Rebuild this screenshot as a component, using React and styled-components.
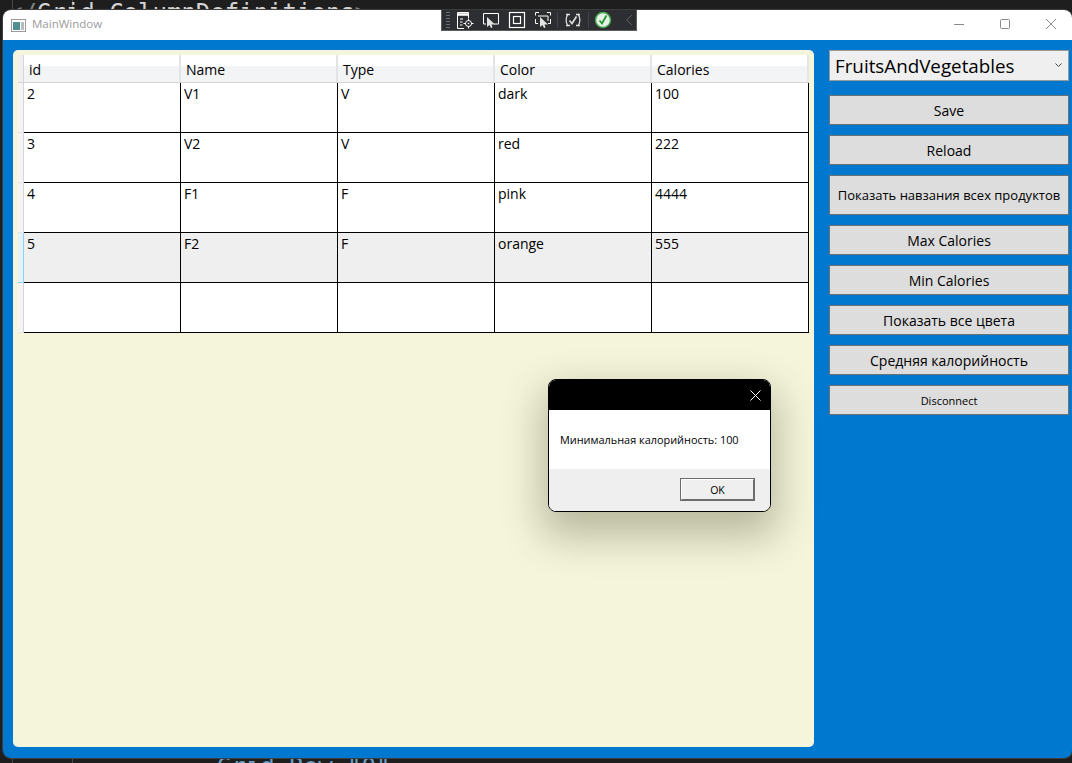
import React from 'react';
import styled, { createGlobalStyle } from 'styled-components';

const columns = ['id', 'Name', 'Type', 'Color', 'Calories'];
const rows = [
    ['2', 'V1', 'V', 'dark', '100'],
    ['3', 'V2', 'V', 'red', '222'],
    ['4', 'F1', 'F', 'pink', '4444'],
    ['5', 'F2', 'F', 'orange', '555'],
    ['', '', '', '', ''],
];
const buttons = [
    { label: 'Save' },
    { label: 'Reload' },
    { label: 'Показать навзания всех продуктов', tall: true, small: true },
    { label: 'Max Calories' },
    { label: 'Min Calories' },
    { label: 'Показать все цвета' },
    { label: 'Средняя калорийность' },
    { label: 'Disconnect', tiny: true },
];

const Toolbar = () => (
    <DebugBar>
        <Grip />
        <svg width="18" height="18" viewBox="0 0 18 18" fill="none" stroke="#fff" strokeWidth="1">
            <path d="M8 17.500H1.500V1.500H12.500V7" />
            <path d="M1.500 3.500H12.500" strokeWidth="2.500" />
            <path d="M4 8H7M4 11H6.500M4 14H6.500" />
            <circle cx="12.500" cy="12.500" r="3" />
            <circle cx="12.500" cy="12.500" r="0.800" fill="#fff" stroke="none" />
            <path d="M12.500 7.500v2.500M12.500 15v2.500M7.500 12.500h2.500M15 12.500h2.500" />
        </svg>
        <svg width="18" height="18" viewBox="0 0 18 18" fill="none" stroke="#fff" strokeWidth="1">
            <path d="M4 13H1.500V2.500H16.500V13H12" />
            <path d="M5 6V16L7.500 14L9 17L10.500 16.500L9.500 13.500H13Z" fill="#e4e4e4" stroke="none" />
        </svg>
        <svg width="18" height="18" viewBox="0 0 18 18" fill="none" stroke="#fff" strokeWidth="1.200">
            <rect x="1.500" y="1.500" width="15" height="15" />
            <rect x="5.500" y="5.500" width="7" height="7" />
        </svg>
        <svg width="18" height="18" viewBox="0 0 18 18" fill="none" stroke="#fff" strokeWidth="1">
            <path d="M1.500 4.500V1.500H5M13 1.500H16.500V4.500M1.500 8V12.500H4M16.500 8V12.500H14" />
            <path d="M4 5H14V10" />
            <path d="M6 6V16L8.500 14L10 17L11.500 16.500L10.500 13.500H14Z" fill="#e4e4e4" stroke="none" />
        </svg>
        <Divider />
        <svg width="20" height="18" viewBox="0 0 20 18" fill="none" stroke="#dcdcdc" strokeWidth="1.300">
            <path d="M5 3C2.500 6.500 2.500 11.500 5 15M15 3C17.500 6.500 17.500 11.500 15 15" />
            <path d="M3 3.500H7M3 14.500H7M13 3.500H17M13 14.500H17" />
            <path d="M6.500 9.500L9 12.500L13.500 5.500" strokeWidth="1.700" />
        </svg>
        <Divider />
        <svg width="18" height="18" viewBox="0 0 18 18" fill="none">
            <circle cx="9" cy="9" r="7.500" fill="#e8f1e8" stroke="#46a84c" strokeWidth="1.500" />
            <path d="M5.500 9.500L8 12.500L12.500 4.500" stroke="#1f9b2e" strokeWidth="1.800" />
        </svg>
        <Collapse width="10" height="14" viewBox="0 0 10 14" fill="none" stroke="#5e6064" strokeWidth="1">
            <path d="M8 2L2.500 7L8 12" />
        </Collapse>
    </DebugBar>
);

const App = () => (
    <>
        <GlobalStyle />
        <Desktop>
            <CodeLine><Bracket>&lt;/</Bracket>Grid.ColumnDefinitions<Bracket>&gt;</Bracket></CodeLine>
            <Window>
                <TitleBar>
                    <AppIcon>
                        <svg width="15" height="13" viewBox="0 0 15 13">
                            <rect x="0.500" y="0.500" width="14" height="12" fill="#fff" stroke="#9a9a9a" />
                            <rect x="2" y="3" width="7" height="8" fill="#4f8f93" />
                            <rect x="10" y="3" width="3" height="8" fill="#b7bcc0" />
                        </svg>
                    </AppIcon>
                    <WindowTitle>MainWindow</WindowTitle>
                    <Toolbar />
                    <WindowControls>
                        <svg width="12" height="12" viewBox="0 0 12 12" stroke="#8a8a8a" fill="none"><path d="M1 6.500H11" /></svg>
                        <svg width="12" height="12" viewBox="0 0 12 12" stroke="#8a8a8a" fill="none"><rect x="1.500" y="1.500" width="9" height="9" rx="1" /></svg>
                        <svg width="12" height="12" viewBox="0 0 12 12" stroke="#8a8a8a" fill="none"><path d="M1 1L11 11M11 1L1 11" /></svg>
                    </WindowControls>
                </TitleBar>
                <Client>
                    <MainPanel>
                        <Table>
                            <HeaderRow>
                                <Corner />
                                {columns.map((c) => <HeaderCell key={c}>{c}</HeaderCell>)}
                            </HeaderRow>
                            {rows.map((r, i) => (
                                <Row key={i} $alt={i === 3}>
                                    <RowHeader $active={i === 3} />
                                    {r.map((v, j) => <Cell key={j}>{v}</Cell>)}
                                </Row>
                            ))}
                        </Table>
                        <Dialog>
                            <DialogHead>
                                <svg width="11" height="11" viewBox="0 0 11 11" stroke="#fff" fill="none"><path d="M0.500 0.500L10.500 10.500M10.500 0.500L0.500 10.500" /></svg>
                            </DialogHead>
                            <DialogBody>Минимальная калорийность: 100</DialogBody>
                            <DialogFoot><OkButton>OK</OkButton></DialogFoot>
                        </Dialog>
                    </MainPanel>
                    <Sidebar>
                        <Combo>
                            <span>FruitsAndVegetables</span>
                            <svg width="7" height="5" viewBox="0 0 7 5" stroke="#444" fill="none"><path d="M0.500 0.500L3.500 3.500L6.500 0.500" /></svg>
                        </Combo>
                        {buttons.map((b) => (
                            <SideButton key={b.label} $tall={b.tall} $small={b.small} $tiny={b.tiny}>{b.label}</SideButton>
                        ))}
                    </Sidebar>
                </Client>
            </Window>
            <CodeLineBottom>Grid.Row="0"</CodeLineBottom>
        </Desktop>
    </>
);

const GlobalStyle = createGlobalStyle`
    html, body {
        margin: 0;
        padding: 0;
        background: #1e1e1e;
        overflow: hidden;
    }
    * {
        box-sizing: border-box;
    }
`;

const Desktop = styled.div`
    position: relative;
    width: 1072px;
    height: 763px;
    padding: 10px 0 0 3px;
    background:
        linear-gradient(#4a4a4a, #4a4a4a) 12px 0 / 1px 100% no-repeat,
        linear-gradient(#4a4a4a, #4a4a4a) 72px 0 / 1px 100% no-repeat,
        #1e1e1e;
    overflow: hidden;
    font-family: "Open Sans", "Noto Sans", sans-serif;
`;

const CodeLine = styled.div`
    position: absolute;
    left: 8px;
    top: 0;
    height: 10px;
    overflow: hidden;
    font: 24px/24px "DejaVu Sans Mono", monospace;
    white-space: nowrap;
    color: #d4d4d4;
    padding-top: 1px;
`;

const Bracket = styled.span`
    color: #808080;
`;

const CodeLineBottom = styled.div`
    position: absolute;
    left: 217px;
    top: 753px;
    font: 24px "DejaVu Sans Mono", monospace;
    color: #6a9fc9;
`;

const Window = styled.div`
    position: relative;
    z-index: 1;
    width: 1069px;
    height: 748px;
    display: flex;
    flex-direction: column;
    border-radius: 8px;
    overflow: hidden;
    box-shadow: 0 0 0 1px #3d3d3d;
`;

const TitleBar = styled.div`
    position: relative;
    height: 30px;
    flex: none;
    display: flex;
    align-items: center;
    padding-left: 8px;
    background: #fff;
`;

const AppIcon = styled.span`
    display: flex;
    width: 15px;
    margin-right: 6px;
`;

const WindowTitle = styled.span`
    font-size: 11.5px;
    line-height: 28px;
    height: 30px;
    color: #9b9b9b;
`;

const DebugBar = styled.div`
    position: absolute;
    left: 438px;
    top: -1px;
    width: 196px;
    height: 22px;
    display: flex;
    align-items: center;
    gap: 8px;
    padding-left: 4px;
    background: #2d2e32;
    border: 1px solid #5d5d5d;
`;

const Grip = styled.span`
    width: 4px;
    height: 18px;
    margin-right: -2px;
    background-image: radial-gradient(#6d6f73 0.6px, transparent 0.8px);
    background-size: 2px 3px;
`;

const Divider = styled.span`
    width: 1px;
    height: 16px;
    margin: 0 -3px;
    background: #44464a;
`;

const Collapse = styled.svg`
    margin-left: 4px;
`;

const WindowControls = styled.div`
    margin-left: auto;
    display: flex;
    align-items: center;
    gap: 34px;
    padding: 0 15px 2px 0;
`;

const Client = styled.div`
    flex: 1;
    display: flex;
    gap: 15px;
    padding: 10px 3px 11px 10px;
    background: #0078d0;
`;

const MainPanel = styled.div`
    position: relative;
    width: 801px;
    padding: 5px 0 0 5px;
    background: #f5f5dc;
    border-radius: 5px;
`;

const Table = styled.div`
    width: 791px;
    display: flex;
    flex-direction: column;
`;

const HeaderRow = styled.div`
    height: 28px;
    display: grid;
    grid-template-columns: 6px repeat(5, 157px);
    background: linear-gradient(#ffffff 0 11px, #f3f4f6 11px);
    border-bottom: 1px solid #d5d5d5;
`;

const Corner = styled.div`
    background: #f0f0f0;
    border-right: 1px solid #d5d5d5;
`;

const HeaderCell = styled.div`
    padding: 6px 0 0 5px;
    font-size: 14px;
    line-height: 18px;
    color: #000;
    border-right: 2px solid #e4e4e6;
`;

const Row = styled.div`
    height: 50px;
    display: grid;
    grid-template-columns: 6px repeat(5, 157px);
    background: ${({ $alt }) => ($alt ? '#efefef' : '#fff')};
`;

const RowHeader = styled.div`
    background: ${({ $active }) => ($active ? '#e3f2fc' : '#f4f4f4')};
    border-right: 1px solid ${({ $active }) => ($active ? '#8fd0f5' : '#d5d5d5')};
    border-bottom: 1px solid ${({ $active }) => ($active ? '#8fd0f5' : '#e4e4e4')};
`;

const Cell = styled.div`
    padding: 2px 0 0 3px;
    font-size: 14px;
    line-height: 18px;
    color: #000;
    border-right: 1px solid #000;
    border-bottom: 1px solid #000;
`;

const Dialog = styled.div`
    position: absolute;
    left: 535px;
    top: 329px;
    width: 223px;
    height: 133px;
    display: flex;
    flex-direction: column;
    background: #fff;
    border: 1px solid #000;
    border-radius: 8px;
    box-shadow: 0 18px 40px 6px rgba(60, 60, 30, 0.33);
`;

const DialogHead = styled.div`
    height: 30px;
    flex: none;
    display: flex;
    align-items: center;
    justify-content: flex-end;
    padding-right: 9px;
    background: #000;
    border-radius: 7px 7px 0 0;
`;

const DialogBody = styled.div`
    flex: 1;
    padding: 22px 0 0 11px;
    font-size: 10.900px;
    line-height: 16px;
    color: #000;
`;

const DialogFoot = styled.div`
    height: 42px;
    flex: none;
    display: flex;
    justify-content: flex-end;
    padding: 9px 15px 0 0;
    background: #efefef;
    border-radius: 0 0 7px 7px;
`;

const OkButton = styled.button`
    width: 75px;
    height: 23px;
    padding: 0;
    font-family: inherit;
    font-size: 10.5px;
    color: #000;
    background: #efefef;
    border: 2px solid;
    border-color: #fff #6c6c6c #6c6c6c #fff;
    outline: 1px solid #6c6c6c;
    outline-offset: -1px;
`;

const Sidebar = styled.div`
    width: 240px;
    display: flex;
    flex-direction: column;
    gap: 10px;
`;

const Combo = styled.div`
    height: 31px;
    flex: none;
    margin-bottom: 4px;
    display: flex;
    align-items: center;
    justify-content: space-between;
    padding: 0 6px 0 5px;
    font-size: 18.800px;
    color: #000;
    background: #efefef;
    border: 1px solid #9a9a9a;
`;

const SideButton = styled.button`
    height: ${({ $tall }) => ($tall ? '40px' : '30px')};
    flex: none;
    padding: 0;
    font-family: inherit;
    font-size: ${({ $tiny, $small }) => ($tiny ? '11px' : $small ? '13px' : '14px')};
    color: #000;
    background: #dddddd;
    border: 1px solid #707070;
`;

export default App;
